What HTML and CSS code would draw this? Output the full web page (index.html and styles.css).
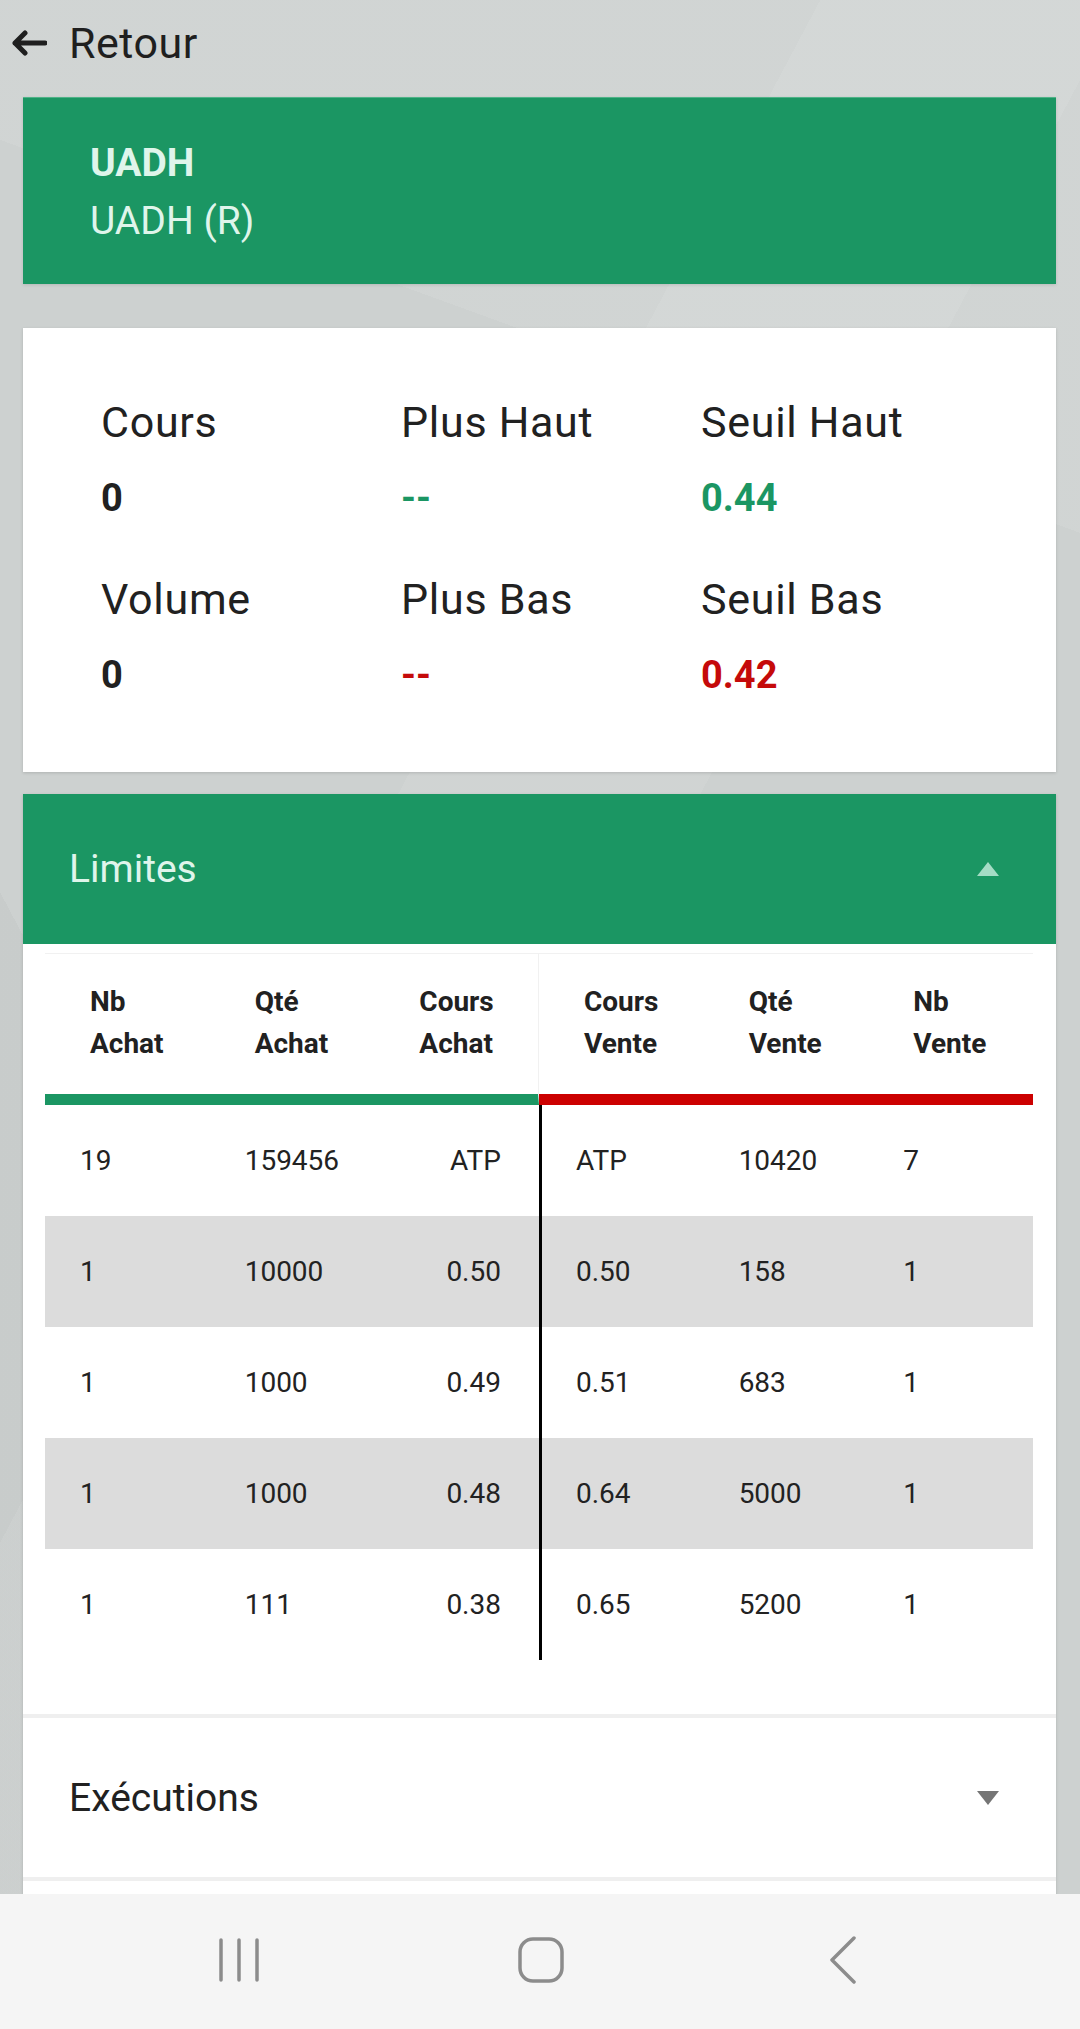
FILE: index.html
```html
<!DOCTYPE html>
<html lang="fr">
<head>
    <meta charset="UTF-8">
    <meta name="viewport" content="width=device-width, initial-scale=1.0">
    <link rel="stylesheet" href="styles.css">
    <title>UADH - Détail</title>
</head>
<body>
    <div class="screen">
        <main class="page">
            <a class="back" href="#">
                <svg class="back-icon" width="36" height="26" viewBox="0 0 36 26">
                    <path d="M34 13H4M14 3L4 13l10 10" fill="none" stroke="#1f1f1f" stroke-width="5" stroke-linecap="round" stroke-linejoin="round"/>
                </svg>
                Retour
            </a>

            <section class="title-card">
                <div class="code">UADH</div>
                <div class="name">UADH (R)</div>
            </section>

            <section class="stats-card">
                <div class="stat">
                    <div class="stat-label">Cours</div>
                    <div class="stat-value">0</div>
                </div>
                <div class="stat">
                    <div class="stat-label">Plus Haut</div>
                    <div class="stat-value up">--</div>
                </div>
                <div class="stat">
                    <div class="stat-label">Seuil Haut</div>
                    <div class="stat-value up">0.44</div>
                </div>
                <div class="stat">
                    <div class="stat-label">Volume</div>
                    <div class="stat-value">0</div>
                </div>
                <div class="stat">
                    <div class="stat-label">Plus Bas</div>
                    <div class="stat-value down">--</div>
                </div>
                <div class="stat">
                    <div class="stat-label">Seuil Bas</div>
                    <div class="stat-value down">0.42</div>
                </div>
            </section>

            <div class="panels">
                <section class="panel">
                    <div class="panel-head open">
                        <span>Limites</span>
                        <svg width="22" height="14" viewBox="0 0 22 14"><polygon points="11,0 22,14 0,14" fill="#a5dcc5"/></svg>
                    </div>
                    <div class="panel-body">
                        <table class="book">
                            <thead>
                                <tr>
                                    <th>Nb<br>Achat</th>
                                    <th>Qté<br>Achat</th>
                                    <th>Cours<br>Achat</th>
                                    <th>Cours<br>Vente</th>
                                    <th>Qté<br>Vente</th>
                                    <th>Nb<br>Vente</th>
                                </tr>
                            </thead>
                            <tbody id="bookRows">
                            </tbody>
                        </table>
                    </div>
                </section>

                <section class="panel">
                    <div class="panel-head">
                        <span>Exécutions</span>
                        <svg width="22" height="14" viewBox="0 0 22 14"><polygon points="0,0 22,0 11,14" fill="#757575"/></svg>
                    </div>
                </section>

                <section class="panel panel-rest"></section>
            </div>
        </main>

        <nav class="system-nav">
            <div class="nav-slot">
                <svg width="42" height="46" viewBox="0 0 42 46">
                    <path d="M3 3v40M21 3v40M39 3v40" stroke="#8c8c8c" stroke-width="3.5" stroke-linecap="round"/>
                </svg>
            </div>
            <div class="nav-slot">
                <svg width="46" height="46" viewBox="0 0 46 46">
                    <rect x="2" y="2" width="42" height="42" rx="13" fill="none" stroke="#8c8c8c" stroke-width="3.5"/>
                </svg>
            </div>
            <div class="nav-slot">
                <svg width="28" height="48" viewBox="0 0 28 48">
                    <polyline points="25,2 3,24 25,46" fill="none" stroke="#8c8c8c" stroke-width="3.5" stroke-linecap="round" stroke-linejoin="round"/>
                </svg>
            </div>
        </nav>
    </div>

    <script>
        const orders = [
            { nbA: "19", qtA: "159456", crA: "ATP", crV: "ATP", qtV: "10420", nbV: "7" },
            { nbA: "1", qtA: "10000", crA: "0.50", crV: "0.50", qtV: "158", nbV: "1" },
            { nbA: "1", qtA: "1000", crA: "0.49", crV: "0.51", qtV: "683", nbV: "1" },
            { nbA: "1", qtA: "1000", crA: "0.48", crV: "0.64", qtV: "5000", nbV: "1" },
            { nbA: "1", qtA: "111", crA: "0.38", crV: "0.65", qtV: "5200", nbV: "1" }
        ];

        function displayBook() {
            const body = document.getElementById("bookRows");
            body.innerHTML = "";

            orders.forEach(o => {
                const row = document.createElement("tr");
                row.innerHTML = `
                    <td>${o.nbA}</td>
                    <td>${o.qtA}</td>
                    <td>${o.crA}</td>
                    <td>${o.crV}</td>
                    <td>${o.qtV}</td>
                    <td>${o.nbV}</td>
                `;
                body.appendChild(row);
            });
        }

        displayBook();
    </script>
</body>
</html>
```

FILE: styles.css
```css
body {
    font-family: Roboto, "Liberation Sans", Arial, sans-serif;
    margin: 0;
    padding: 0;
    color: #212121;
    background-color: #cdd1d0;
    background-image:
        linear-gradient(118deg, transparent 38%, rgba(255, 255, 255, 0.07) 38%, rgba(255, 255, 255, 0.07) 52%, transparent 52%),
        linear-gradient(62deg, rgba(0, 0, 0, 0.025) 0 28%, transparent 28%),
        linear-gradient(200deg, rgba(255, 255, 255, 0.08) 0 22%, transparent 22%);
}

.screen {
    height: 100vh;
    display: flex;
    flex-direction: column;
}

.page {
    flex: 1;
    overflow: hidden;
}

/* back link */
.back {
    display: flex;
    align-items: center;
    gap: 22px;
    padding: 15px 0 26px 11px;
    font-size: 43px;
    letter-spacing: 0.5px;
    line-height: 56px;
    color: #1f1f1f;
    text-decoration: none;
}

/* header card */
.title-card {
    margin: 0 24px 0 23px;
    padding: 36px 67px 34px;
    background-color: #1b9663;
    border-top: 1px solid #4fb287;
    color: #dff5eb;
    font-size: 39px;
    line-height: 58px;
    box-shadow: 0 1px 3px rgba(0, 0, 0, 0.12);
}

.title-card .code {
    font-weight: 700;
}

/* stats */
.stats-card {
    margin: 44px 24px 0 23px;
    padding: 66px 0 71px 78px;
    background-color: #ffffff;
    box-shadow: 0 1px 3px rgba(0, 0, 0, 0.15);
    display: grid;
    grid-template-columns: 300px 300px 300px;
    row-gap: 47px;
}

.stat-label {
    font-size: 43px;
    letter-spacing: 0.7px;
    line-height: 56px;
    color: #212121;
}

.stat-value {
    margin-top: 22px;
    font-size: 38px;
    line-height: 52px;
    font-weight: 700;
    color: #212121;
}

.stat-value.up {
    color: #1b9663;
}

.stat-value.down {
    color: #c50a0a;
}

/* expansion panels */
.panels {
    margin: 22px 24px 0 23px;
    display: flex;
    flex-direction: column;
    gap: 4px;
    background-color: #efefef;
    box-shadow: 0 1px 3px rgba(0, 0, 0, 0.15);
}

.panel {
    background-color: #ffffff;
}

.panel-head {
    height: 159px;
    padding: 0 57px 0 46px;
    display: flex;
    align-items: center;
    justify-content: space-between;
    font-size: 39px;
    color: #212121;
}

.panel-head.open {
    height: 150px;
    background-color: #1b9663;
    color: #dff5eb;
}

.panel-body {
    padding: 9px 23px 54px 22px;
}

.panel-rest {
    height: 40px;
}

/* order book */
.book {
    width: 100%;
    table-layout: fixed;
    border-collapse: separate;
    border-spacing: 0;
}

.book th {
    padding: 27px 0 29px 45px;
    text-align: left;
    vertical-align: top;
    font-size: 28px;
    line-height: 42px;
    font-weight: 700;
    color: #212121;
    border-top: 1px solid #f1f1f1;
    border-bottom: 11px solid #1b9663;
}

.book th:nth-child(3) {
    border-right: 1px solid #f1f1f1;
}

.book th:nth-child(n+4) {
    border-bottom-color: #cc0000;
}

.book td {
    height: 111px;
    padding: 0 0 0 35px;
    font-size: 28px;
    color: #222222;
}

.book td:nth-child(3) {
    text-align: right;
    padding-right: 38px;
}

.book td:nth-child(4) {
    border-left: 3px solid #000000;
    padding-left: 34px;
}

.book tbody tr:nth-child(even) td {
    background-color: #dcdcdc;
}

/* android navigation bar */
.system-nav {
    height: 135px;
    flex-shrink: 0;
    padding: 0 0 4px 88px;
    box-sizing: border-box;
    background-color: #f5f5f5;
    display: flex;
    align-items: center;
}

.nav-slot {
    width: 302px;
    display: flex;
    justify-content: center;
}
```
